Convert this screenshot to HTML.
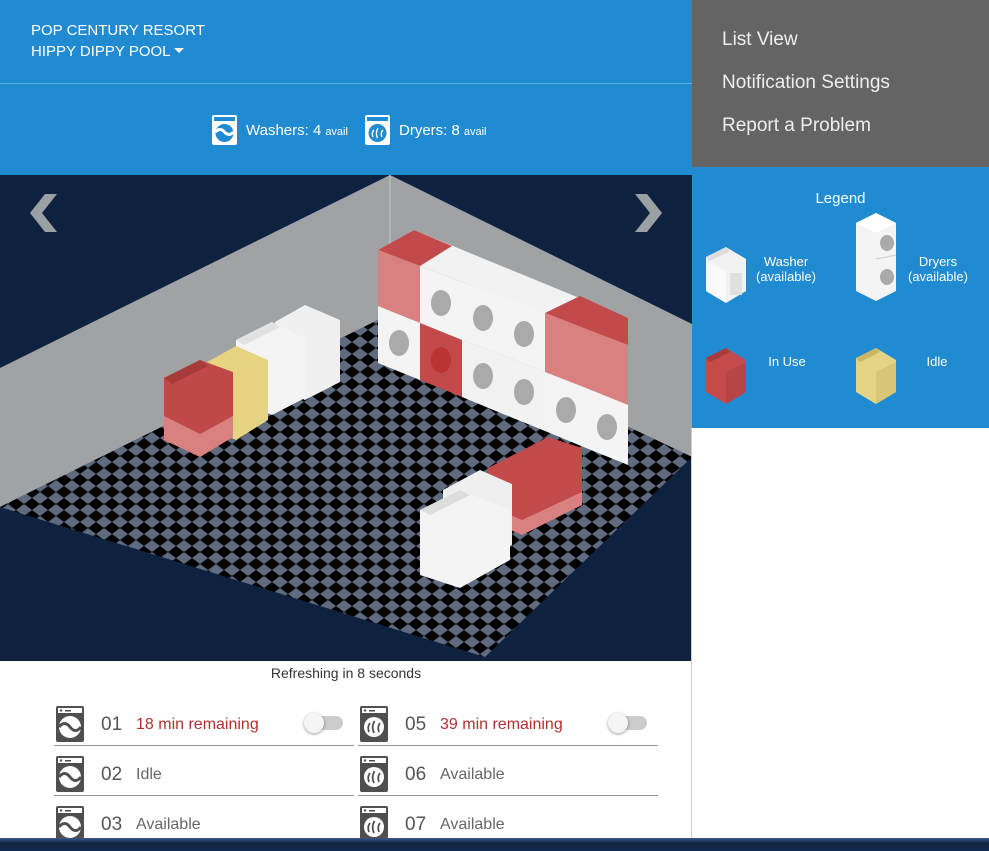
<!DOCTYPE html>
<html><head><meta charset="utf-8"><style>
*{margin:0;padding:0;box-sizing:border-box}
body{width:989px;height:851px;overflow:hidden;background:#fff;font-family:"Liberation Sans","DejaVu Sans",sans-serif;position:relative}
.hdr{position:absolute;left:0;top:0;width:692px;height:175px;background:#208bd1;color:#fff}
.hdr .t1{position:absolute;left:31px;top:22px;font-size:15px}
.hdr .t2{position:absolute;left:31px;top:43px;font-size:15px}
.hdr .line{position:absolute;left:0;top:83px;width:692px;height:1px;background:#5eaee0}
.stat{position:absolute;top:115px;font-size:15px;display:flex;align-items:center}
.stat small{font-size:11px;margin-left:4px;margin-top:3px}
.menu{position:absolute;left:692px;top:0;width:297px;height:167px;background:#646464;color:#eee;font-size:19px}
.menu div{position:absolute;left:30px}
.legend{position:absolute;left:692px;top:167px;width:297px;height:261px;background:#208bd1;color:#fff;font-size:13px;text-align:center}
.scene{position:absolute;left:0;top:175px;width:692px;height:486px;background:#0e2240}
.vline{position:absolute;left:691px;top:428px;width:1px;height:410px;background:#ccc}
.refresh{position:absolute;left:0;top:665px;width:692px;text-align:center;font-size:14px;color:#333}
.row{position:absolute;height:50px;width:300px;border-bottom:1px solid #999}
.row .ic{position:absolute;left:2px;top:10px}
.row .n{position:absolute;left:47px;top:18px;font-size:19px;color:#555}
.row .s{position:absolute;left:82px;top:20px;font-size:16px;color:#666}
.row .s.r{color:#b3302f}
.tog{position:absolute;left:252px;top:20px;width:37px;height:14px;border-radius:7px;background:#ccc}
.tog:after{content:"";position:absolute;left:-2px;top:-3px;width:20px;height:20px;border-radius:10px;background:#f5f5f5;box-shadow:0 1px 3px rgba(0,0,0,.4)}
.bot{position:absolute;left:0;top:838px;width:989px;height:13px;background:linear-gradient(#3a5a8c,#0e2240 40%,#142a50)}
</style></head><body>
<div class="hdr">
 <div class="t1">POP CENTURY RESORT</div>
 <div class="t2">HIPPY DIPPY POOL <span style="display:inline-block;border-left:5px solid transparent;border-right:5px solid transparent;border-top:5px solid #fff;vertical-align:middle;margin-bottom:3px"></span></div>
 <div class="line"></div>
 <div class="stat" style="left:212px"><svg width="25" height="30" viewBox="0 0 25 30"><rect x="0" y="0" width="25" height="30" rx="2" fill="#fff"/><rect x="2" y="2" width="21" height="4" fill="#208bd1"/><circle cx="12.5" cy="18" r="9" fill="#208bd1"/><path d="M3.5 17 Q8 12 12.5 17 T21.5 17" stroke="#fff" stroke-width="3" fill="none"/></svg><span style="margin-left:9px">Washers: 4</span><small>avail</small></div>
 <div class="stat" style="left:365px"><svg width="25" height="30" viewBox="0 0 25 30"><rect x="0" y="0" width="25" height="30" rx="2" fill="#fff"/><rect x="2" y="2" width="21" height="4" fill="#208bd1"/><circle cx="12.5" cy="18" r="9" fill="#208bd1"/><path d="M8 22 Q6 18 9 15 M12.5 23 Q10 18 13 13 M17 22 Q15 18 18 15" stroke="#fff" stroke-width="1.3" fill="none"/></svg><span style="margin-left:9px">Dryers: 8</span><small>avail</small></div>
</div>
<div class="menu">
 <div style="top:29px">List View</div>
 <div style="top:72px">Notification Settings</div>
 <div style="top:115px">Report a Problem</div>
</div>
<div class="legend">
 <div style="position:absolute;left:0;width:297px;top:23px;font-size:15px">Legend</div>
 <svg style="position:absolute;left:14px;top:80px" width="42" height="56" viewBox="0 0 42 56"><polygon points="0,10 20,0 40,12 40,44 20,56 0,44" fill="#f2f2f2"/><polygon points="0,10 20,0 24,4 4,14" fill="#ddd"/><polygon points="0,14 0,44 20,56 20,24" fill="#fafafa"/><rect x="24" y="26" width="12" height="22" fill="#e0e0e0"/></svg>
 <div style="position:absolute;left:58px;top:87px;width:72px">Washer<br>(available)</div>
 <svg style="position:absolute;left:164px;top:46px" width="42" height="88" viewBox="0 0 42 88"><polygon points="0,10 20,0 40,10 40,78 20,88 0,78" fill="#f4f4f4"/><polygon points="0,10 20,0 40,10 20,20" fill="#fff"/><ellipse cx="31" cy="30" rx="7" ry="8" fill="#aaa"/><ellipse cx="31" cy="64" rx="7" ry="8" fill="#aaa"/><line x1="20" y1="46" x2="40" y2="42" stroke="#ccc"/></svg>
 <div style="position:absolute;left:206px;top:87px;width:80px">Dryers<br>(available)</div>
 <svg style="position:absolute;left:14px;top:181px" width="42" height="58" viewBox="0 0 42 58"><polygon points="0,10 20,0 40,12 40,44 20,56 0,44" fill="#c44b4b"/><polygon points="0,10 20,0 24,4 4,14" fill="#a73a3a"/><polygon points="20,24 40,14 40,44 20,56" fill="#b84545"/></svg>
 <div style="position:absolute;left:60px;top:187px;width:70px">In Use</div>
 <svg style="position:absolute;left:164px;top:181px" width="42" height="58" viewBox="0 0 42 58"><polygon points="0,10 20,0 40,12 40,44 20,56 0,44" fill="#e5d486"/><polygon points="0,10 20,0 24,4 4,14" fill="#cbb766"/><polygon points="20,24 40,14 40,44 20,56" fill="#d8c676"/></svg>
 <div style="position:absolute;left:210px;top:187px;width:70px">Idle</div>
</div>
<div class="scene">
<svg width="692" height="486" viewBox="0 175 692 486">
 <defs><pattern id="ck" width="16" height="12" patternUnits="userSpaceOnUse"><rect width="16" height="12" fill="#000"/><polygon points="8,0 16,6 8,12 0,6" fill="#5f6b80"/></pattern></defs>
 <polygon points="0,368 390,175 390,314 0,507" fill="#9fa3a6"/>
 <polygon points="390,175 692,324 692,457 390,314" fill="#9fa3a6"/>
 <line x1="390" y1="175" x2="390" y2="314" stroke="#c4c7c9"/>
 <polygon points="390,314 692,457 485,657 0,507" fill="url(#ck)"/>
 <polygon points="30,213 45,194 57,194 42,213 57,232 45,232" fill="#9aa0a4"/>
 <polygon points="662,213 647,194 635,194 650,213 635,232 647,232" fill="#9aa0a4"/>
 <!-- washers row -->
 <polygon points="275,322 305,305 340,320 340,382 305,400 275,386" fill="#f0f0f0"/>
 <polygon points="236,340 272,322 305,338 305,398 272,415 236,400" fill="#f4f4f4"/>
 <polygon points="236,340 272,322 280,327 244,345" fill="#e2e2e2"/>
 <polygon points="200,366 236,346 268,360 268,420 236,440 200,424" fill="#e6d482"/>
 <polygon points="164,378 200,360 233,372 233,437 200,457 164,440" fill="#bf4848"/>
 <polygon points="164,416 200,434 233,416 233,437 200,457 164,440" fill="#d98080"/>
 <polygon points="164,378 200,360 208,366 172,384" fill="#a83a3a"/>
 <!-- dryer wall -->
 <polygon points="378,250 414,230 628,318 628,345" fill="#f2f2f2"/>
 <polygon points="378,250 414,230 452,246 420,266" fill="#c24a4a"/>
 <polygon points="545,313 580,296 628,318 628,345 586,329" fill="#c24a4a"/>
 <polygon points="378,250 420,266 420,323 378,306" fill="#d98080"/>
 <polygon points="378,306 420,323 420,380 378,363" fill="#f4f4f4"/>
 <polygon points="420,266 462,282 462,340 420,323" fill="#f4f4f4"/>
 <polygon points="420,323 462,340 462,397 420,380" fill="#c24a4a"/>
 <polygon points="462,282 503,297 503,355 462,340" fill="#f4f4f4"/>
 <polygon points="462,340 503,355 503,414 462,397" fill="#f2f2f2"/>
 <polygon points="503,297 545,313 545,372 503,355" fill="#f4f4f4"/>
 <polygon points="503,355 545,372 545,431 503,414" fill="#f2f2f2"/>
 <polygon points="545,313 586,329 586,388 545,372" fill="#d98080"/>
 <polygon points="545,372 586,388 586,448 545,431" fill="#f4f4f4"/>
 <polygon points="586,329 628,345 628,405 586,388" fill="#d98080"/>
 <polygon points="586,388 628,405 628,465 586,448" fill="#f4f4f4"/>
 <g fill="#aaa"><ellipse cx="399" cy="343" rx="10" ry="13"/><ellipse cx="441" cy="303" rx="10" ry="13"/><ellipse cx="483" cy="318" rx="10" ry="13"/><ellipse cx="483" cy="376" rx="10" ry="13"/><ellipse cx="524" cy="334" rx="10" ry="13"/><ellipse cx="524" cy="392" rx="10" ry="13"/><ellipse cx="566" cy="410" rx="10" ry="13"/><ellipse cx="607" cy="427" rx="10" ry="13"/></g>
 <g fill="#b33"><ellipse cx="441" cy="360" rx="10" ry="13"/></g>
 <!-- front group -->
 <polygon points="488,468 548,437 582,448 582,505 522,535 488,520" fill="#c24a4a"/>
 <polygon points="488,505 522,520 582,492 582,505 522,535 488,520" fill="#d98080"/>
 <polygon points="443,490 480,470 512,484 512,545 480,560 443,545" fill="#efefef"/>
 <polygon points="420,510 460,490 510,510 510,560 460,588 420,575" fill="#f4f4f4"/>
 <polygon points="420,510 460,490 470,495 430,515" fill="#ddd"/>
</svg>
</div>
<div class="vline"></div>
<div class="refresh">Refreshing in 8 seconds</div>

<div class="row" style="left:54px;top:696px"><svg class="ic" width="28" height="36" viewBox="0 0 28 36"><rect width="28" height="36" rx="2" fill="#4f4f4f"/><rect x="2" y="2" width="24" height="5" fill="#fff"/><circle cx="5" cy="4.5" r="1.2" fill="#4f4f4f"/><rect x="9" y="4" width="6" height="1.5" fill="#4f4f4f"/><circle cx="14" cy="21" r="11" fill="#fff"/><path d="M3 21 Q8.5 14 14 21 T25 21" stroke="#4f4f4f" stroke-width="3" fill="none"/></svg><span class="n">01</span><span class="s r">18 min remaining</span><div class="tog"></div></div>
<div class="row" style="left:54px;top:746px"><svg class="ic" width="28" height="36" viewBox="0 0 28 36"><rect width="28" height="36" rx="2" fill="#4f4f4f"/><rect x="2" y="2" width="24" height="5" fill="#fff"/><circle cx="5" cy="4.5" r="1.2" fill="#4f4f4f"/><rect x="9" y="4" width="6" height="1.5" fill="#4f4f4f"/><circle cx="14" cy="21" r="11" fill="#fff"/><path d="M3 21 Q8.5 14 14 21 T25 21" stroke="#4f4f4f" stroke-width="3" fill="none"/></svg><span class="n">02</span><span class="s">Idle</span></div>
<div class="row" style="left:54px;top:796px"><svg class="ic" width="28" height="36" viewBox="0 0 28 36"><rect width="28" height="36" rx="2" fill="#4f4f4f"/><rect x="2" y="2" width="24" height="5" fill="#fff"/><circle cx="5" cy="4.5" r="1.2" fill="#4f4f4f"/><rect x="9" y="4" width="6" height="1.5" fill="#4f4f4f"/><circle cx="14" cy="21" r="11" fill="#fff"/><path d="M3 21 Q8.5 14 14 21 T25 21" stroke="#4f4f4f" stroke-width="3" fill="none"/></svg><span class="n">03</span><span class="s">Available</span></div>

<div class="row" style="left:358px;top:696px"><svg class="ic" width="28" height="36" viewBox="0 0 28 36"><rect width="28" height="36" rx="2" fill="#4f4f4f"/><rect x="2" y="2" width="24" height="5" fill="#fff"/><circle cx="5" cy="4.5" r="1.2" fill="#4f4f4f"/><rect x="9" y="4" width="6" height="1.5" fill="#4f4f4f"/><circle cx="14" cy="21" r="10" fill="#fff"/><path d="M9 26 Q7 21 10 17 M14 27 Q11 21 14.5 15 M19 26 Q17 21 20 17" stroke="#4f4f4f" stroke-width="1.8" fill="none"/></svg><span class="n">05</span><span class="s r">39 min remaining</span><div class="tog"></div></div>
<div class="row" style="left:358px;top:746px"><svg class="ic" width="28" height="36" viewBox="0 0 28 36"><rect width="28" height="36" rx="2" fill="#4f4f4f"/><rect x="2" y="2" width="24" height="5" fill="#fff"/><circle cx="5" cy="4.5" r="1.2" fill="#4f4f4f"/><rect x="9" y="4" width="6" height="1.5" fill="#4f4f4f"/><circle cx="14" cy="21" r="10" fill="#fff"/><path d="M9 26 Q7 21 10 17 M14 27 Q11 21 14.5 15 M19 26 Q17 21 20 17" stroke="#4f4f4f" stroke-width="1.8" fill="none"/></svg><span class="n">06</span><span class="s">Available</span></div>
<div class="row" style="left:358px;top:796px"><svg class="ic" width="28" height="36" viewBox="0 0 28 36"><rect width="28" height="36" rx="2" fill="#4f4f4f"/><rect x="2" y="2" width="24" height="5" fill="#fff"/><circle cx="5" cy="4.5" r="1.2" fill="#4f4f4f"/><rect x="9" y="4" width="6" height="1.5" fill="#4f4f4f"/><circle cx="14" cy="21" r="10" fill="#fff"/><path d="M9 26 Q7 21 10 17 M14 27 Q11 21 14.5 15 M19 26 Q17 21 20 17" stroke="#4f4f4f" stroke-width="1.8" fill="none"/></svg><span class="n">07</span><span class="s">Available</span></div>
<div class="bot"></div>
</body></html>
